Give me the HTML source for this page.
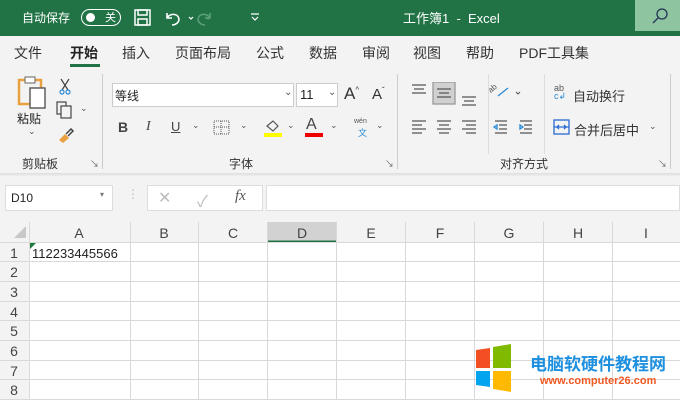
<!DOCTYPE html>
<html><head><meta charset="utf-8"><style>
*{margin:0;padding:0;box-sizing:border-box}
body{width:680px;height:400px;overflow:hidden;background:#fff;font-family:"Liberation Sans","Noto Sans CJK SC",sans-serif;position:relative;color:#222}
.a{position:absolute}
.t{position:absolute;white-space:nowrap}
</style></head><body>
<div class="a" style="left:0;top:0;width:680px;height:36px;background:#217346"></div>
<div class="t" style="left:22px;top:9px;color:#fff;font-size:12px">自动保存</div>
<div class="a" style="left:81px;top:9px;width:40px;height:17px;border:1.5px solid #fff;border-radius:9px"></div>
<div class="a" style="left:86px;top:13px;width:9px;height:9px;background:#fff;border-radius:50%"></div>
<div class="t" style="left:105px;top:9px;color:#fff;font-size:11px">关</div>
<svg class="a" style="left:134px;top:9px" width="18" height="18" fill="none" stroke="#fff" stroke-width="1.5"><rect x="1" y="1" width="15" height="15"/><rect x="4" y="1" width="9" height="5"/><rect x="4" y="10" width="9" height="6"/></svg>
<svg class="a" style="left:164px;top:9px" width="60" height="18" fill="none" stroke="#fff" stroke-width="1.6"><path d="M3 4v5h5M3 9c3-5 11-5 12 1 0 4-4 6-7 6"/><path d="M25 8l2 2 2-2" stroke-width="1.2"/><path d="M56 4v5h-5M56 9c-3-5-11-5-12 1 0 4 4 6 7 6" stroke="#5aa07a" transform="translate(-10 0)"/><path d="M58 8l2 2 2-2" stroke="#5aa07a" stroke-width="1.2" transform="translate(-16 0)"/></svg>
<svg class="a" style="left:250px;top:12px" width="10" height="10" fill="none" stroke="#fff" stroke-width="1.2"><path d="M1 2h8M2 5l3 3 3-3"/></svg>
<div class="t" style="left:403px;top:8px;color:#fff;font-size:13px">工作簿1 &nbsp;- &nbsp;Excel</div>
<div class="a" style="left:635px;top:0;width:45px;height:31px;background:#8fc4a1"></div>
<svg class="a" style="left:652px;top:8px" width="16" height="16" fill="none" stroke="#235" stroke-width="1.3"><circle cx="10" cy="6" r="5"/><path d="M6 10l-5 5"/></svg>
<div class="a" style="left:0;top:36px;width:680px;height:140px;background:#f3f3f3"></div>
<div class="t" style="left:14px;top:43px;font-size:14px;color:#333">文件</div>
<div class="t" style="left:70px;top:43px;font-size:14px;font-weight:bold;color:#222">开始</div>
<div class="a" style="left:70px;top:64px;width:30px;height:3px;background:#217346"></div>
<div class="t" style="left:122px;top:43px;font-size:14px;color:#333">插入</div>
<div class="t" style="left:175px;top:43px;font-size:14px;color:#333">页面布局</div>
<div class="t" style="left:256px;top:43px;font-size:14px;color:#333">公式</div>
<div class="t" style="left:309px;top:43px;font-size:14px;color:#333">数据</div>
<div class="t" style="left:362px;top:43px;font-size:14px;color:#333">审阅</div>
<div class="t" style="left:413px;top:43px;font-size:14px;color:#333">视图</div>
<div class="t" style="left:466px;top:43px;font-size:14px;color:#333">帮助</div>
<div class="t" style="left:519px;top:43px;font-size:14px;color:#333">PDF工具集</div>
<svg class="a" style="left:17px;top:76px" width="34" height="34" fill="none"><rect x="2" y="4" width="22" height="24" stroke="#e8a040" stroke-width="2.5"/><rect x="8" y="1" width="10" height="6" fill="#fff" stroke="#666"/><rect x="13" y="12" width="15" height="20" fill="#fff" stroke="#555" stroke-width="1.4"/></svg>
<div class="t" style="left:17px;top:110px;font-size:12px">粘贴</div>
<div class="t" style="left:28px;top:126px;font-size:9px;color:#555">⌄</div>
<svg class="a" style="left:58px;top:78px" width="14" height="18" fill="none" stroke="#444" stroke-width="1.2"><path d="M3 1l7 11M11 1l-7 11"/><circle cx="4" cy="14" r="2" stroke="#2a8ad4"/><circle cx="10" cy="14" r="2" stroke="#2a8ad4"/></svg>
<svg class="a" style="left:56px;top:101px" width="20" height="20" fill="none" stroke="#444" stroke-width="1.2"><rect x="1" y="1" width="9" height="12"/><rect x="5" y="5" width="10" height="12" fill="#f3f3f3"/></svg>
<div class="t" style="left:80px;top:103px;font-size:9px;color:#555">⌄</div>
<svg class="a" style="left:57px;top:128px" width="18" height="16"><path d="M2 12l6-6 4 4-6 5z" fill="#e8a040"/><path d="M9 6l5-5 2 2-5 5" stroke="#444" fill="none" stroke-width="1.5"/></svg>
<div class="t" style="left:22px;top:155px;font-size:12px;color:#333">剪贴板</div>
<div class="t" style="left:90px;top:157px;font-size:9px;color:#666">↘</div>
<div class="a" style="left:102px;top:74px;width:1px;height:95px;background:#ccc"></div>
<div class="a" style="left:112px;top:83px;width:182px;height:24px;background:#fff;border:1px solid #ccc"></div>
<div class="t" style="left:115px;top:87px;font-size:12px">等线</div>
<div class="t" style="left:284px;top:87px;font-size:10px;color:#555">⌄</div>
<div class="a" style="left:296px;top:83px;width:42px;height:24px;background:#fff;border:1px solid #ccc"></div>
<div class="t" style="left:300px;top:87px;font-size:13px">11</div>
<div class="t" style="left:328px;top:87px;font-size:10px;color:#555">⌄</div>
<div class="t" style="left:344px;top:84px;font-size:17px;color:#333">A<sup style="font-size:8px">^</sup></div>
<div class="t" style="left:372px;top:86px;font-size:15px;color:#333">A<sup style="font-size:8px">ˇ</sup></div>
<div class="t" style="left:118px;top:119px;font-size:14px;font-weight:bold;color:#444">B</div>
<div class="t" style="left:146px;top:119px;font-size:14px;font-style:italic;font-family:'Liberation Serif',serif;color:#444">I</div>
<div class="t" style="left:171px;top:119px;font-size:13px;text-decoration:underline;color:#444">U</div>
<div class="t" style="left:192px;top:120px;font-size:9px;color:#555">⌄</div>
<svg class="a" style="left:213px;top:120px" width="18" height="16" fill="none" stroke="#555" stroke-dasharray="1 1"><rect x="1" y="1" width="15" height="13"/><path d="M8 1v13M1 7h15"/></svg>
<div class="t" style="left:240px;top:120px;font-size:9px;color:#555">⌄</div>
<svg class="a" style="left:263px;top:118px" width="20" height="20"><path d="M4 8l6-5 5 5-5 5z" fill="none" stroke="#555" stroke-width="1.2"/><rect x="1" y="15" width="18" height="4" fill="#ffff00"/></svg>
<div class="t" style="left:287px;top:120px;font-size:9px;color:#555">⌄</div>
<div class="t" style="left:306px;top:116px;font-size:16px;color:#444">A</div>
<div class="a" style="left:305px;top:133px;width:18px;height:4px;background:#e00"></div>
<div class="t" style="left:330px;top:120px;font-size:9px;color:#555">⌄</div>
<div class="t" style="left:354px;top:118px;font-size:7px;color:#555">wén</div>
<div class="t" style="left:358px;top:126px;font-size:9px;color:#2a8ad4">文</div>
<div class="t" style="left:376px;top:120px;font-size:9px;color:#555">⌄</div>
<div class="t" style="left:229px;top:155px;font-size:12px;color:#333">字体</div>
<div class="t" style="left:385px;top:157px;font-size:9px;color:#666">↘</div>
<div class="a" style="left:397px;top:74px;width:1px;height:95px;background:#ccc"></div>
<svg class="a" style="left:410px;top:82px" width="170" height="60" stroke="#555" stroke-width="1.3" fill="none">
<path d="M2 3h14M4 7h10M2 11h14"/>
<rect x="23" y="0" width="22" height="22" fill="#d0d0d0" stroke="#999"/>
<path d="M27 7h14M29 11h10M27 15h14"/>
<path d="M52 15h14M54 19h10M52 23h14"/>
<path d="M2 39h14M2 43h10M2 47h14M2 51h10"/>
<path d="M27 39h14M29 43h10M27 47h14M29 51h10"/>
<path d="M52 39h14M56 43h10M52 47h14M56 51h10"/>
<path d="M85 39h12M89 43h8M89 47h8M85 51h12"/><path d="M84 45l3-2v4z" stroke="#2a8ad4"/>
<path d="M110 39h12M114 43h8M114 47h8M110 51h12"/><path d="M113 45l-3-2v4z" stroke="#2a8ad4"/>
<path d="M88 14l10-8" stroke="#2a8ad4"/><path d="M106 10l2 2 2-2" stroke-width="1"/>
</svg>
<div class="t" style="left:488px;top:84px;font-size:8px;color:#555;transform:rotate(-40deg)">ab</div>
<div class="a" style="left:488px;top:74px;width:1px;height:80px;background:#ddd"></div>
<div class="a" style="left:544px;top:74px;width:1px;height:80px;background:#ddd"></div>
<div class="t" style="left:554px;top:84px;font-size:9px;line-height:8px;color:#555">ab<br><span style="color:#2a8ad4">c↲</span></div>
<div class="t" style="left:573px;top:86px;font-size:13px;color:#333">自动换行</div>
<svg class="a" style="left:553px;top:119px" width="17" height="16" fill="none" stroke="#2a6ad4" stroke-width="1.3"><rect x="1" y="1" width="15" height="14"/><path d="M1 8h15M4 8l2-2M4 8l2 2M13 8l-2-2M13 8l-2 2"/></svg>
<div class="t" style="left:574px;top:120px;font-size:13px;color:#333">合并后居中</div>
<div class="t" style="left:649px;top:121px;font-size:9px;color:#555">⌄</div>
<div class="t" style="left:500px;top:155px;font-size:12px;color:#333">对齐方式</div>
<div class="t" style="left:658px;top:157px;font-size:9px;color:#666">↘</div>
<div class="a" style="left:670px;top:74px;width:1px;height:95px;background:#ccc"></div>
<div class="a" style="left:0;top:173px;width:680px;height:4px;background:linear-gradient(#ddd,#f3f3f3)"></div>
<div class="a" style="left:0;top:176px;width:680px;height:46px;background:#f3f3f3"></div>
<div class="a" style="left:5px;top:185px;width:108px;height:26px;background:#fff;border:1px solid #ddd"></div>
<div class="t" style="left:11px;top:191px;font-size:12px">D10</div>
<div class="t" style="left:100px;top:190px;font-size:8px;color:#777">▾</div>
<div class="t" style="left:127px;top:187px;font-size:12px;color:#bbb">⋮</div>
<div class="a" style="left:147px;top:185px;width:116px;height:26px;background:#fff;border:1px solid #ddd"></div>
<div class="t" style="left:158px;top:188px;font-size:16px;color:#bbb">✕</div>
<div class="t" style="left:197px;top:188px;font-size:16px;color:#bbb">✓</div>
<div class="t" style="left:235px;top:188px;font-size:15px;font-style:italic;font-family:'Liberation Serif',serif;color:#555">fx</div>
<div class="a" style="left:266px;top:185px;width:414px;height:26px;background:#fff;border:1px solid #ddd"></div>
<svg class="a" style="left:0;top:222px" width="680" height="178">
<rect x="0" y="0" width="680" height="20" fill="#f3f3f3"/>
<rect x="0" y="20" width="29" height="158" fill="#f3f3f3"/>
<rect x="267" y="0" width="69" height="20" fill="#d2d2d2"/>
<path d="M267 19.5h69" stroke="#217346" stroke-width="2"/>
<path d="M14 16l12-12v12z" fill="#c8c8c8"/>
<g stroke="#d9d9d9" stroke-width="1">
<path d="M130.5 0v178M198.5 0v178M267.5 0v178M336.5 0v178M405.5 0v178M474.5 0v178M543.5 0v178M612.5 0v178M29.5 0v178"/>
<path d="M0 20.5h680M0 39.5h680M0 59.5h680M0 79.5h680M0 98.5h680M0 118.5h680M0 138.5h680M0 157.5h680M0 177.5h680"/>
</g>
<path d="M30 21h6l-6 6z" fill="#1e7a3c"/>
<g font-family="Liberation Sans,sans-serif" font-size="14" fill="#444" text-anchor="middle">
<text x="79" y="16">A</text><text x="164" y="16">B</text><text x="233" y="16">C</text><text x="302" y="16">D</text><text x="371" y="16">E</text><text x="440" y="16">F</text><text x="509" y="16">G</text><text x="578" y="16">H</text><text x="646" y="16">I</text>
<text x="14" y="36">1</text><text x="14" y="55">2</text><text x="14" y="75">3</text><text x="14" y="95">4</text><text x="14" y="114">5</text><text x="14" y="134">6</text><text x="14" y="154">7</text><text x="14" y="173">8</text>
</g>
<text x="32" y="36" font-family="Liberation Sans,sans-serif" font-size="13" fill="#222">112233445566</text>
</svg>
<svg class="a" style="left:475px;top:343px" width="52" height="50"><path d="M1 7l14-2v20H1z" fill="#f25022"/><path d="M18 4l18-3v24H18z" fill="#7fba00"/><path d="M1 28h14v16L1 42z" fill="#00a4ef"/><path d="M18 28h18v21l-18-3z" fill="#ffb900"/></svg>
<div class="t" style="left:530px;top:350px;font-size:17px;font-weight:bold;color:#1e90e0">电脑软硬件教程网</div>
<div class="t" style="left:540px;top:375px;font-size:11px;font-weight:bold;color:#f05a22">www.computer26.com</div>
</body></html>
